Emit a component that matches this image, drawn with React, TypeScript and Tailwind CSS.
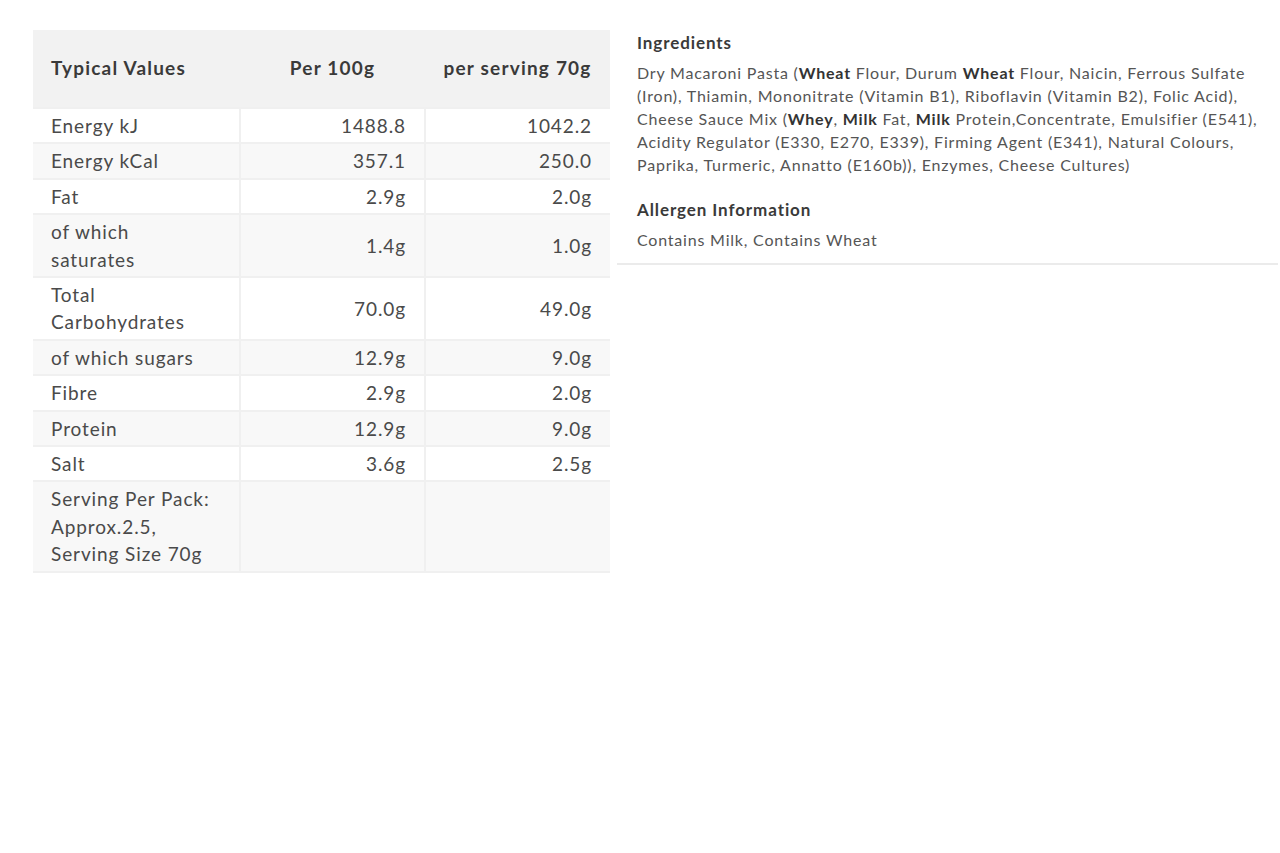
import React from 'react';

type Row = { label: string; per100: string; perServing: string };

const rows: Row[] = [
    { label: 'Energy kJ', per100: '1488.8', perServing: '1042.2' },
    { label: 'Energy kCal', per100: '357.1', perServing: '250.0' },
    { label: 'Fat', per100: '2.9g', perServing: '2.0g' },
    { label: 'of which saturates', per100: '1.4g', perServing: '1.0g' },
    { label: 'Total Carbohydrates', per100: '70.0g', perServing: '49.0g' },
    { label: 'of which sugars', per100: '12.9g', perServing: '9.0g' },
    { label: 'Fibre', per100: '2.9g', perServing: '2.0g' },
    { label: 'Protein', per100: '12.9g', perServing: '9.0g' },
    { label: 'Salt', per100: '3.6g', perServing: '2.5g' },
    { label: 'Serving Per Pack: Approx.2.5, Serving Size 70g', per100: '', perServing: '' },
];

const App: React.FC = () => {
    return (
        <div
            className="min-h-[853px] bg-white flex items-start pt-[30px] pl-[33px] pr-[2px] gap-[7px] text-[#4a4a4a]"
            style={{ fontFamily: 'Lato, "Open Sans", sans-serif' }}
        >
            {/* Nutrition table */}
            <table className="w-[577px] border-collapse table-fixed shrink-0">
                <colgroup>
                    <col className="w-[207px]" />
                    <col className="w-[185px]" />
                    <col className="w-[185px]" />
                </colgroup>
                <thead>
                    <tr className="bg-[#f2f2f2] h-[78px]">
                        <th className="text-left pl-[18px] text-[19px] font-bold tracking-[1.2px] text-[#3a3a3a]">Typical Values</th>
                        <th className="text-center text-[19px] font-bold tracking-[1.2px] text-[#3a3a3a]">Per 100g</th>
                        <th className="text-center text-[19px] font-bold tracking-[1.2px] text-[#3a3a3a]">per serving 70g</th>
                    </tr>
                </thead>
                <tbody>
                    {rows.map((row, index) => (
                        <tr key={index} className={index % 2 === 1 ? 'bg-[#f8f8f8]' : 'bg-white'}>
                            <td className="border-y-2 border-r-2 border-[#f0f0f0] pl-[18px] pr-[24px] py-[3px] text-[19px] leading-[27.4px] tracking-[0.9px]">
                                {row.label}
                            </td>
                            <td className="border-2 border-[#f0f0f0] pr-[18px] py-[3px] text-right text-[19px] leading-[27.4px] tracking-[0.9px]">
                                {row.per100}
                            </td>
                            <td className="border-y-2 border-l-2 border-[#f0f0f0] pr-[18px] py-[3px] text-right text-[19px] leading-[27.4px] tracking-[0.9px]">
                                {row.perServing}
                            </td>
                        </tr>
                    ))}
                </tbody>
            </table>

            {/* Ingredients & allergens */}
            <div className="flex-1 border-b-2 border-[#ebebeb] px-[20px] pb-[12px]">
                <h3 className="text-[17px] font-bold tracking-[0.9px] text-[#3a3a3a] leading-[26px]">Ingredients</h3>
                <p className="mt-[5px] text-[16px] leading-[23px] tracking-[0.8px] text-[#555]">
                    Dry Macaroni Pasta (<b className="text-[#333]">Wheat</b> Flour, Durum <b className="text-[#333]">Wheat</b> Flour, Naicin, Ferrous Sulfate (Iron), Thiamin, Mononitrate (Vitamin B1), Riboflavin (Vitamin B2), Folic Acid), Cheese Sauce Mix (<b className="text-[#333]">Whey</b>, <b className="text-[#333]">Milk</b> Fat, <b className="text-[#333]">Milk</b> Protein,Concentrate, Emulsifier (E541), Acidity Regulator (E330, E270, E339), Firming Agent (E341), Natural Colours, Paprika, Turmeric, Annatto (E160b)), Enzymes, Cheese Cultures)
                </p>
                <h3 className="mt-[21px] text-[17px] font-bold tracking-[0.9px] text-[#3a3a3a] leading-[26px]">Allergen Information</h3>
                <p className="mt-[5px] text-[16px] leading-[23px] tracking-[0.8px] text-[#555]">Contains Milk, Contains Wheat</p>
            </div>
        </div>
    );
};

export default App;
